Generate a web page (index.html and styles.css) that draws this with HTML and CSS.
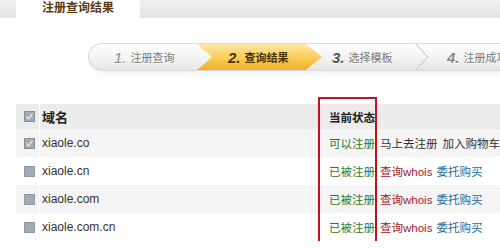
FILE: index.html
```html
<!DOCTYPE html>
<html lang="zh-CN">
<head>
  <meta charset="UTF-8">
  <title>注册查询结果</title>
  <link rel="stylesheet" href="styles.css">
</head>
<body>
  <div class="topbar">
    <div class="tab">注册查询结果</div>
  </div>

  <div class="steps">
    <div class="step step-1"><em>1.</em>注册查询</div>
    <div class="step step-2"><em>2.</em>查询结果</div>
    <div class="step step-3"><em>3.</em>选择模板</div>
    <svg class="sep" width="14" height="26" viewBox="0 0 14 26">
      <polyline points="1,0 13,13 1,26" fill="none" stroke="#d2d2d2" stroke-width="1.2"/>
      <polyline points="3,0 14,12" fill="none" stroke="#fff" stroke-width="1"/>
    </svg>
    <div class="step step-4"><em>4.</em>注册成功</div>
  </div>

  <!-- 查询结果 -->
  <div class="result">
    <div class="row head">
      <div class="pick"><svg class="cb" viewBox="0 0 11 11"><rect x=".5" y=".5" width="10" height="10" fill="#a3acb5" stroke="#86909a"/><polyline points="2.5,5.5 4.5,8 8.5,2.5" fill="none" stroke="#e4e8ec" stroke-width="1.3"/></svg></div>
      <div class="name">域名</div>
      <div class="status">当前状态</div>
    </div>
    <div class="row alt">
      <div class="pick"><svg class="cb" viewBox="0 0 11 11"><rect x=".5" y=".5" width="10" height="10" fill="#a3acb5" stroke="#86909a"/><polyline points="2.5,5.5 4.5,8 8.5,2.5" fill="none" stroke="#e4e8ec" stroke-width="1.3"/></svg></div>
      <div class="name">xiaole.co</div>
      <div class="status"><span class="ok">可以注册</span><span class="act">马上去注册</span><span class="act">加入购物车</span></div>
    </div>
    <div class="row">
      <div class="pick"><svg class="cb" viewBox="0 0 11 11"><rect x=".5" y=".5" width="10" height="10" fill="#a3acb5" stroke="#8f99a3"/></svg></div>
      <div class="name">xiaole.cn</div>
      <div class="status"><span class="ok">已被注册</span><span class="whois">查询whois</span><span class="buy">委托购买</span></div>
    </div>
    <div class="row alt">
      <div class="pick"><svg class="cb" viewBox="0 0 11 11"><rect x=".5" y=".5" width="10" height="10" fill="#a3acb5" stroke="#8f99a3"/></svg></div>
      <div class="name">xiaole.com</div>
      <div class="status"><span class="ok">已被注册</span><span class="whois">查询whois</span><span class="buy">委托购买</span></div>
    </div>
    <div class="row">
      <div class="pick"><svg class="cb" viewBox="0 0 11 11"><rect x=".5" y=".5" width="10" height="10" fill="#a3acb5" stroke="#8f99a3"/></svg></div>
      <div class="name">xiaole.com.cn</div>
      <div class="status"><span class="ok">已被注册</span><span class="whois">查询whois</span><span class="buy">委托购买</span></div>
    </div>

    <div class="mark"></div>
  </div>
</body>
</html>
```

FILE: styles.css
```css
body {
  margin: 0;
  background: #fff;
  font-family: 'Liberation Sans', 'Noto Sans CJK SC', sans-serif;
  color: #333;
  overflow: hidden;
}

.topbar {
  height: 17px;
  background: linear-gradient(#f1f1f1, #e3e3e3);
  border-bottom: 1px solid #e6e6e6;
}

.tab {
  width: 124px;
  height: 18px;
  margin-left: 16px;
  background: #fff;
  text-align: center;
  font-size: 12px;
  font-weight: 700;
  line-height: 16px;
  color: #5a3b12;
}

.steps {
  display: flex;
  width: 440px;
  height: 26px;
  margin: 25px 0 0 88px;
  border: 1px solid #dadada;
  border-right: none;
  border-radius: 14px 0 0 14px;
  background: linear-gradient(#ffffff, #f4f4f4 50%, #e6e6e6);
  box-shadow: 0 8px 8px -6px rgba(0, 0, 0, .07);
}

.step {
  flex: none;
  display: flex;
  align-items: center;
  box-sizing: border-box;
  font-size: 11px;
  color: #777;
  text-shadow: 0 1px 0 #fff;
  white-space: nowrap;
}

.step em {
  font-family: 'Liberation Sans', sans-serif;
  font-size: 15px;
  font-weight: 700;
  margin-right: 4px;
  color: #8a8a8a;
}

.step-1 {
  width: 108px;
  padding-left: 25px;
}

.step-1 em {
  font-weight: 400;
}

.step-2 {
  width: 125px;
  padding-left: 31px;
  background: linear-gradient(#fde9a6, #f9ce5a 50%, #f2b02a);
  clip-path: polygon(0 0, 87% 0, 100% 50%, 87% 100%, 0 100%, 12% 50%);
  color: #4a3405;
  font-weight: 700;
  text-shadow: none;
}

.step-2 em {
  color: #4a3405;
}

.step-3 {
  width: 93px;
  padding-left: 10px;
}

.step-3 em {
  color: #555;
}

.sep {
  flex: none;
  display: block;
}

.step-4 {
  padding-left: 18px;
}

.result {
  position: relative;
  margin: 33px 0 0 16px;
}

.row {
  display: flex;
  height: 28px;
  font-size: 12px;
}

.row.head {
  height: 25px;
  background: #ececec;
  font-weight: 700;
  color: #222;
}

.row.alt {
  background: #f5f5f5;
}

.pick {
  flex: none;
  width: 24px;
  box-sizing: border-box;
  padding-left: 8px;
  border-right: 1px solid #fff;
  display: flex;
  align-items: center;
}

.cb {
  width: 11px;
  height: 11px;
  display: block;
}

.name {
  flex: none;
  width: 277px;
  padding-left: 2px;
  display: flex;
  align-items: center;
}

.head .name {
  font-size: 13px;
}

.status {
  flex: none;
  padding-left: 10px;
  display: flex;
  align-items: center;
  white-space: nowrap;
  font-size: 11.5px;
}

.status span {
  margin-right: 4px;
}

.status .ok {
  color: #2f7a22;
  margin-right: 5px;
}

.status .act {
  color: #333;
  margin-right: 5px;
}

.status .whois {
  color: #a3202c;
}

.status .buy {
  color: #2a6c9a;
}

.mark {
  position: absolute;
  left: 302px;
  top: -7px;
  width: 55px;
  height: 142px;
  border: 2px solid #c2121e;
}
```
